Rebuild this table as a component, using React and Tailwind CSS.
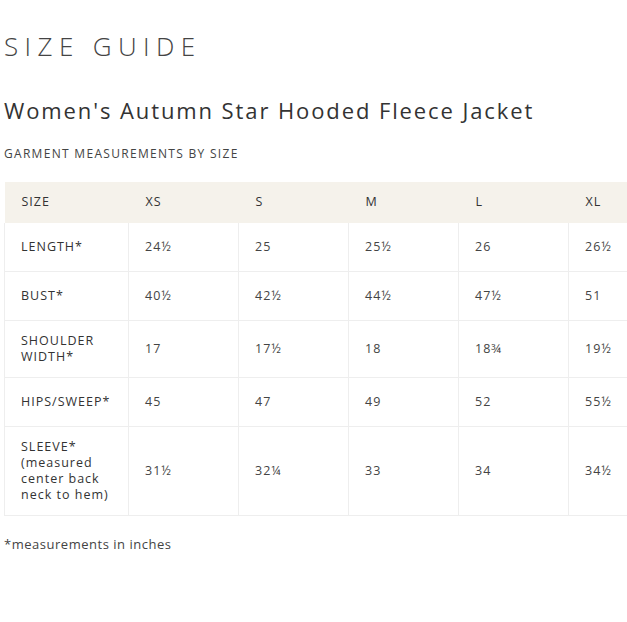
const SIZES = ["XS", "S", "M", "L", "XL"];

const ROWS = [
  { label: ["LENGTH*"], values: ["24½", "25", "25½", "26", "26½"] },
  { label: ["BUST*"], values: ["40½", "42½", "44½", "47½", "51"] },
  { label: ["SHOULDER", "WIDTH*"], values: ["17", "17½", "18", "18¾", "19½"] },
  { label: ["HIPS/SWEEP*"], values: ["45", "47", "49", "52", "55½"] },
  {
    label: ["SLEEVE*", "(measured", "center back", "neck to hem)"],
    values: ["31½", "32¼", "33", "34", "34½"],
  },
];

const FONT = { fontFamily: '"Open Sans", "Noto Sans", sans-serif' };

export default function App() {
  return (
    <div className="min-h-screen bg-white text-[#333] overflow-hidden pl-[4px]" style={FONT}>
      {/* Page heading */}
      <h1 className="pt-[33px] text-[26px] leading-[26px] font-light tracking-[6.4px] text-[#444]">
        SIZE GUIDE
      </h1>

      <h2 className="mt-[37px] text-[22px] leading-[28px] font-medium tracking-[1.9px] text-[#333]">
        Women's Autumn Star Hooded Fleece Jacket
      </h2>

      <p className="mt-[22px] text-[12px] leading-[16px] font-medium tracking-[1.3px] text-[#444]">
        GARMENT MEASUREMENTS BY SIZE
      </p>

      {/* Measurements table */}
      <table className="mt-[20px] border-collapse table-fixed w-[674px] text-[12.5px] tracking-[0.08em]">
        <colgroup>
          <col className="w-[124px]" />
          {SIZES.map((s) => (
            <col key={s} className="w-[110px]" />
          ))}
        </colgroup>
        <thead>
          <tr className="bg-[#f5f2eb] h-[41px]">
            <th className="text-left font-medium pl-[17px]">SIZE</th>
            {SIZES.map((s) => (
              <th key={s} className="text-left font-medium pl-[17px]">
                {s}
              </th>
            ))}
          </tr>
        </thead>
        <tbody>
          {ROWS.map((row) => (
            <tr key={row.label[0]} className="border-b border-[#eeeeee]">
              <td className="border-l border-r border-[#eeeeee] pl-[16px] pr-2 py-3 leading-[16px] font-medium">
                {row.label.map((l) => (
                  <div key={l}>{l}</div>
                ))}
              </td>
              {row.values.map((v, i) => (
                <td
                  key={i}
                  className="border-r border-[#eeeeee] pl-[16px] py-3 leading-[24px] text-[#444]"
                >
                  {v}
                </td>
              ))}
            </tr>
          ))}
        </tbody>
      </table>

      <p className="mt-[20px] text-[13px] leading-[16px] tracking-[0.04em] text-[#444]">
        *measurements in inches
      </p>
    </div>
  );
}
